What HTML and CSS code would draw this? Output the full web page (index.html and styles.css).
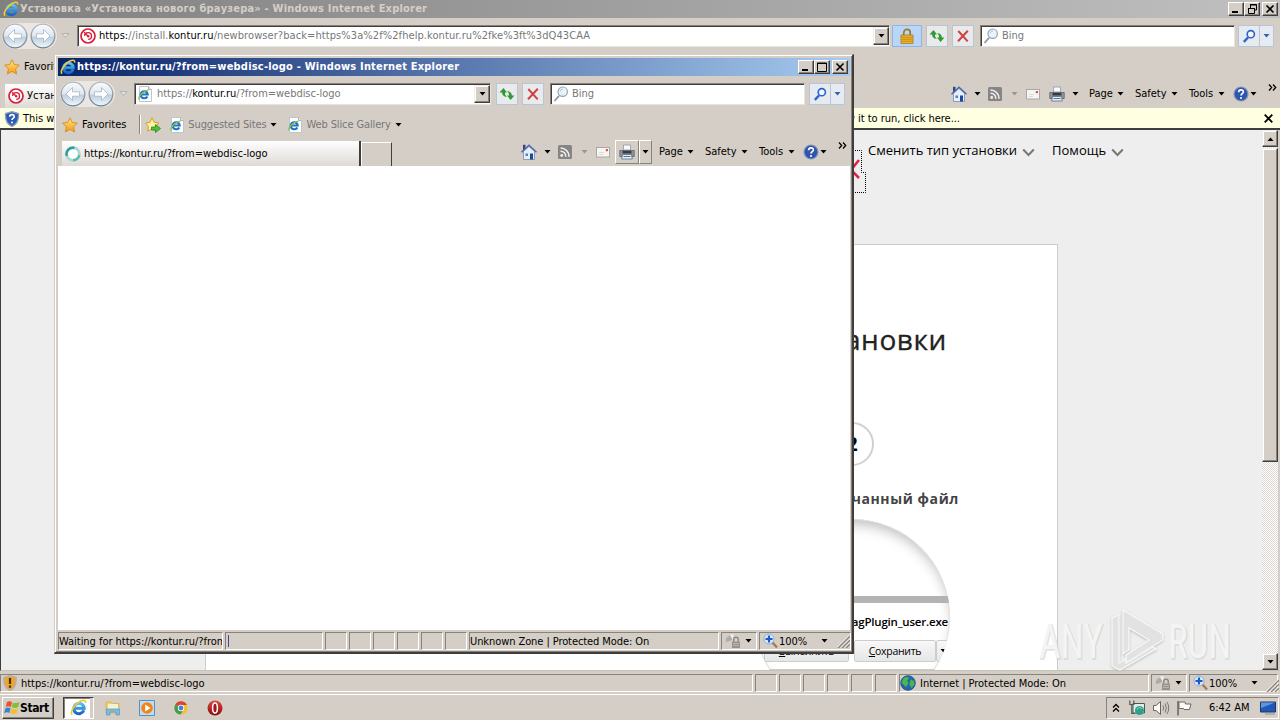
FILE: index.html
```html
<!DOCTYPE html>
<html lang="ru">
  <head>
    <meta charset="UTF-8" />
    <meta
      name="viewport"
      content="width=device-width, initial-scale=1.0"
    />
    <title>Установка «Установка нового браузера»</title>
    <link rel="stylesheet" href="styles.css">
  </head>
  <body>
    <svg width="0" height="0" class="sprite">
      <defs>
        <linearGradient id="orb" x1="0" y1="0" x2="0" y2="1">
          <stop offset="0" stop-color="#fafcfe" />
          <stop offset="0.5" stop-color="#dde7f0" />
          <stop offset="0.55" stop-color="#bccfdf" />
          <stop offset="1" stop-color="#f0f8fd" />
        </linearGradient>
        <linearGradient id="rim" x1="0" y1="0" x2="0" y2="1">
          <stop offset="0" stop-color="#b5b8bb" />
          <stop offset="1" stop-color="#6f7f8d" />
        </linearGradient>
        <linearGradient id="gold" x1="0" y1="0" x2="0" y2="1">
          <stop offset="0" stop-color="#ffe88a" />
          <stop offset="1" stop-color="#f29b12" />
        </linearGradient>
        <linearGradient id="red" x1="0" y1="0" x2="0" y2="1">
          <stop offset="0" stop-color="#e0483f" />
          <stop offset="1" stop-color="#8a0a0c" />
        </linearGradient>
        <linearGradient id="blue" x1="0" y1="0" x2="0" y2="1">
          <stop offset="0" stop-color="#5cc0f5" />
          <stop offset="1" stop-color="#1767c2" />
        </linearGradient>
      </defs>
      <symbol id="ie" viewBox="0 0 16 16">
        <path d="M13 10.600A4.900 4.900 0 1 1 13.300 8.700H5" fill="none" stroke="url(#blue)" stroke-width="2.900" />
        <path d="M2 14.800C-.400 12 4.600 4.600 9.500 2.200C12.500.700 15 .700 14.600 3.600" fill="none" stroke="#f0cb36" stroke-width="1.600" />
      </symbol>
      <symbol id="iepage" viewBox="0 0 16 16">
        <path d="M2.500.500H11.500L14.500 3.500V15.500H2.500Z" fill="#fff" stroke="#bcc5cd" />
        <path d="M11.500.500V3.500H14.500" fill="#dde4ea" stroke="#a9b3bd" />
        <path d="M10.300 10.400A3.500 3.500 0 1 1 10.700 8.500H4" fill="none" stroke="#1c74c8" stroke-width="2.200" />
        <path d="M2 13.500C.800 10.500 7 4.500 11.500 4.200" fill="none" stroke="#8dbf3c" stroke-width="1.300" />
      </symbol>
      <symbol id="orb-left" viewBox="0 0 26 26">
        <circle cx="13" cy="13" r="11.800" fill="url(#orb)" stroke="url(#rim)" stroke-width="1.300" />
        <path d="M12.500 6.500L6 13L12.500 19.500V15.200H19.500V10.800H12.500Z" fill="#fff" stroke="#a4b5c4" stroke-width=".8" />
      </symbol>
      <symbol id="orb-right" viewBox="0 0 26 26">
        <circle cx="13" cy="13" r="11.800" fill="url(#orb)" stroke="url(#rim)" stroke-width="1.300" />
        <path d="M13.500 6.500L20 13L13.500 19.500V15.200H6.500V10.800H13.500Z" fill="#fff" stroke="#a4b5c4" stroke-width=".8" />
      </symbol>
      <symbol id="kontur" viewBox="0 0 16 16">
        <circle cx="8" cy="8" r="7" fill="#fff" stroke="#d8203c" stroke-width="1.700" />
        <path d="M4.700 8A3.400 3.400 0 1 1 8.200 11.400M8 8L4 4.200" fill="none" stroke="#d8203c" stroke-width="1.400" />
        <circle cx="8.200" cy="8.200" r="1.200" fill="#d8203c" />
      </symbol>
      <symbol id="star" viewBox="0 0 16 16">
        <path d="M8 .8L10.300 5.500L15.400 6.100L11.600 9.700L12.600 15L8 12.400L3.400 15L4.400 9.700L.600 6.100L5.700 5.500Z" fill="url(#gold)" stroke="#d98a1a" stroke-width=".9" />
      </symbol>
      <symbol id="star-add" viewBox="0 0 16 16">
        <path d="M7 .8L9.200 5.300L14 6L10.400 9.400L11 14L7 12L2.600 14L3.500 9.400L.600 6.100L5 5.300Z" fill="#fff2a4" stroke="#d9a01a" />
        <path d="M6.500 10H10.500V7.500L15.500 11.500L10.500 15.500V13H6.500Z" fill="#4fc13e" stroke="#26851e" stroke-width=".8" />
      </symbol>
      <symbol id="refresh" viewBox="0 0 16 16">
        <path d="M.5 6.500L4.500 2L8 6.500H6C5.800 8.500 6.600 9.800 8 11C5 10.800 3 9 3.200 6.500Z" fill="#2f9a33" />
        <path d="M15.500 9.500L11.500 14L8 9.500H10C10.200 7.500 9.400 6.200 8 5C11 5.200 13 7 12.800 9.500Z" fill="#2f9a33" />
      </symbol>
      <symbol id="stop" viewBox="0 0 16 16">
        <path d="M3.300 3L12.700 13.300M12.800 2.800L3 13.300" stroke="#cf4343" stroke-width="2" />
      </symbol>
      <symbol id="lock" viewBox="0 0 16 16">
        <path d="M4.800 7V4.500A3.200 3.200 0 0 1 11.200 4.500V7" fill="none" stroke="#9a7a28" stroke-width="1.700" />
        <path d="M2 7H14V15.500H2Z" fill="#eeb52c" stroke="#a87a14" stroke-width=".8" />
        <path d="M2.500 9.300H13.500M2.500 11.300H13.500M2.500 13.300H13.500" stroke="#bd8717" stroke-width=".8" />
      </symbol>
      <symbol id="glass" viewBox="0 0 16 16">
        <path d="M6 9.800L1.500 15" stroke="#8d99a6" stroke-width="1.800" />
        <circle cx="9.700" cy="5.700" r="4.700" fill="#e9f3fb" stroke="#95a3b3" stroke-width="1.200" />
        <path d="M7 5.500A3 3 0 0 1 10 3" fill="none" stroke="#9fc8ea" />
      </symbol>
      <symbol id="find" viewBox="0 0 16 16">
        <path d="M7 9.500L2.800 13.800" stroke="#2b62d0" stroke-width="2.400" />
        <circle cx="9.800" cy="6.200" r="3.600" fill="#f4f8fd" stroke="#2b62d0" stroke-width="1.600" />
      </symbol>
      <symbol id="home" viewBox="0 0 16 16">
        <path d="M2 .8H4.500V6H2Z" fill="#34457e" />
        <path d="M2.500 7.500L8 2.500L13.500 7.500V15.500H2.500Z" fill="#e6f0fa" stroke="#7a8db0" stroke-width=".8" />
        <path d="M.500 8.300L8 1.300L15.500 8.300" fill="none" stroke="#4f69a8" stroke-width="1.500" />
        <path d="M9 9.500H12V15.500H9Z" fill="#1a4a94" />
        <path d="M4.500 9.500H7V12H4.500Z" fill="#5a7dbb" />
      </symbol>
      <symbol id="rss" viewBox="0 0 16 16">
        <rect x="1" y="1" width="14" height="14" rx="1.500" fill="#858585" />
        <circle cx="4.700" cy="11.500" r="1.400" fill="#f3f0ec" />
        <path d="M3.500 7.300A5 5 0 0 1 8.800 12.700M3.500 4A8.500 8.500 0 0 1 12 12.700" fill="none" stroke="#f3f0ec" stroke-width="1.600" />
      </symbol>
      <symbol id="mail" viewBox="0 0 16 16">
        <rect x="1.500" y="3.500" width="13" height="9.500" fill="#f7f5f4" stroke="#aca6a3" />
        <path d="M4 8.500H9M4 10.500H8" stroke="#dedad8" />
        <rect x="10.800" y="5" width="2.200" height="2.200" fill="#d9524c" />
      </symbol>
      <symbol id="printer" viewBox="0 0 16 16">
        <path d="M4.500 1H11.500V6H4.500Z" fill="#f7fafc" stroke="#9097a0" stroke-width=".8" />
        <path d="M.800 6.500H15.200V12.500H.800Z" fill="#8f959d" stroke="#5b616b" stroke-width=".8" />
        <path d="M3.500 7H12.500V9.500H3.500Z" fill="#363c45" />
        <path d="M3.500 10.500H12.500L13.300 15H2.700Z" fill="#e5edf6" stroke="#636b77" stroke-width=".8" />
        <path d="M4.500 12.500H11.500" stroke="#3d7cc0" />
      </symbol>
      <symbol id="help" viewBox="0 0 16 16">
        <circle cx="8" cy="8" r="7" fill="#2d55b0" stroke="#8295bb" stroke-width="1.200" />
        <path d="M5.600 6.200C5.800 2.800 10.700 3.200 10.300 6.200C10 7.700 8 7.700 8 9.600" fill="none" stroke="#fff" stroke-width="1.700" />
        <circle cx="8" cy="12" r="1.100" fill="#fff" />
      </symbol>
      <symbol id="shield" viewBox="0 0 16 16">
        <path d="M8 .7L14.500 2.500C15 8.500 12.500 13.500 8 15.500C3.500 13.500 1 8.500 1.500 2.500Z" fill="#2d5cb8" stroke="#93a0b5" stroke-width="1.300" />
        <path d="M5.700 5.700C5.900 2.800 10.500 3 10.200 5.800C10 7.200 8 7.200 8 9" fill="none" stroke="#fff" stroke-width="1.600" />
        <circle cx="8" cy="11.500" r="1" fill="#fff" />
      </symbol>
      <symbol id="warn" viewBox="0 0 16 16">
        <path d="M8 .7L14 2.500C14.500 8.500 12.500 13.500 8 15.500C3.500 13.500 1.500 8.500 2 2.500Z" fill="#eda62c" stroke="#b5b0a9" stroke-width="1.600" />
        <path d="M8 3V9M8 10.500V12.800" stroke="#4c2a08" stroke-width="2.200" />
      </symbol>
      <symbol id="filter" viewBox="0 0 16 16">
        <path d="M.800 9A6 6 0 0 1 5 2.500L8 6L5 8Z" fill="#aeaba8" />
        <path d="M5 2L8.500 1L8 7Z" fill="#f2f0ee" />
        <path d="M8.700 8.500V6.500A2.300 2.300 0 0 1 13.300 6.500V8.500" fill="none" stroke="#858280" stroke-width="1.300" />
        <path d="M7 8.500H15V15H7Z" fill="#94918e" />
        <path d="M8 10.500H14M8 12.500H14" stroke="#bab7b3" />
      </symbol>
      <symbol id="zoom" viewBox="0 0 16 16">
        <path d="M9 9L14 14.500" stroke="#a8794a" stroke-width="2.300" />
        <circle cx="6" cy="6" r="5" fill="#dbeafa" stroke="#90b0d8" />
        <path d="M6 2.500V9.500M2.500 6H9.500" stroke="#1e5cc4" stroke-width="2.200" />
      </symbol>
      <symbol id="globe" viewBox="0 0 16 16">
        <circle cx="8" cy="8" r="7.300" fill="#2366b5" stroke="#1d4983" stroke-width=".8" />
        <path d="M3 4C5 1.500 8 1.500 9 3L7 6L8.500 8L6 12L3.500 9.500L1.500 8Z" fill="#4cb848" />
        <path d="M10.500 4.500L14 6L14.500 9.500L11.500 13L9.500 9.500Z" fill="#4cb848" />
      </symbol>
      <symbol id="spin" viewBox="0 0 16 16">
        <circle cx="8" cy="8" r="6.300" fill="#fff" stroke="#a9d9d6" stroke-width="2.800" />
        <path d="M1.800 10A6.300 6.300 0 0 1 9.500 2" fill="none" stroke="#2b9f96" stroke-width="2.400" />
        <path d="M8 14.300A6.300 6.300 0 0 0 14.300 9" fill="none" stroke="#5dbbb2" stroke-width="2.400" />
      </symbol>
      <symbol id="caret" viewBox="0 0 7 4">
        <path d="M.500 0H6.500L3.500 3.500Z" fill="currentColor" />
      </symbol>
      <symbol id="grip" viewBox="0 0 13 13">
        <path d="M1 13L13 1M5 13L13 5M9 13L13 9" stroke="#87827b" stroke-width="1.500" />
        <path d="M0 12.500L12.500 0M4 12.500L13 3.500M8 12.500L13 7.500" stroke="#fff" stroke-width=".8" />
      </symbol>
      <symbol id="chevron" viewBox="0 0 13 9">
        <path d="M1.200 1.500L6.500 7L11.800 1.500" fill="none" stroke="#777" stroke-width="2" />
      </symbol>
      <symbol id="more" viewBox="0 0 9 7">
        <path d="M1 .500L3.700 3.500L1 6.500M5 .500L7.700 3.500L5 6.500" fill="none" stroke="#000" stroke-width="1.300" />
      </symbol>
      <symbol id="drop" viewBox="0 0 9 6">
        <path d="M1 .500H8L4.500 4.500Z" fill="#e4e1dd" stroke="#aaa7a3" stroke-width=".8" />
      </symbol>
      <symbol id="min" viewBox="0 0 12 10"><path d="M2 7H8V9H2Z" /></symbol>
      <symbol id="max" viewBox="0 0 12 10"><path d="M1.500 1H10.500V9.500H1.500ZM1.500 1.500H10.500" fill="none" stroke="#000" /></symbol>
      <symbol id="restore" viewBox="0 0 12 10">
        <path d="M4.500 4V.500H10.500V6H8.500M4 1H11M2.500 4.500H8.500V9.500H2.500ZM2 4.500H9" fill="none" stroke="#000" />
      </symbol>
      <symbol id="close" viewBox="0 0 12 10"><path d="M2.500 1.500L9.500 8.500M9.500 1.500L2.500 8.500" stroke="#000" stroke-width="1.700" /></symbol>
    </svg>

    <div class="desktop">
      <!-- main browser window -->
      <div class="browser">
        <div class="titlebar titlebar-inactive">
          <svg class="icon"><use href="#ie" /></svg>
          <span class="title">Установка «Установка нового браузера» - Windows Internet Explorer</span>
          <div class="caption">
            <span class="cap"><svg><use href="#min" /></svg></span>
            <span class="cap"><svg><use href="#restore" /></svg></span>
            <span class="cap cap-close"><svg><use href="#close" /></svg></span>
          </div>
        </div>

        <div class="navbar">
          <div class="orbs">
            <svg><use href="#orb-left" /></svg>
            <svg><use href="#orb-right" /></svg>
          </div>
          <svg class="history"><use href="#drop" /></svg>
          <div class="address">
            <svg class="icon"><use href="#kontur" /></svg>
            <span class="url url-back"><b>https:</b>//install.<b>kontur.ru</b>/newbrowser?back=https%3a%2f%2fhelp.kontur.ru%2fke%3ft%3dQ43CAA</span>
            <span class="combo"><svg><use href="#caret" /></svg></span>
          </div>
          <span class="btn btn-lock"><svg class="icon"><use href="#lock" /></svg></span>
          <span class="btn btn-refresh"><svg class="icon"><use href="#refresh" /></svg></span>
          <span class="btn btn-stop"><svg class="icon"><use href="#stop" /></svg></span>
          <div class="search"><svg class="icon"><use href="#glass" /></svg>Bing</div>
          <div class="go">
            <span><svg class="icon"><use href="#find" /></svg></span>
            <i><svg><use href="#caret" /></svg></i>
          </div>
        </div>

        <div class="favbar">
          <svg class="icon"><use href="#star" /></svg>
          <span class="fav">Favorites</span>
        </div>

        <div class="tabbar">
          <div class="tab tab-back">
            <svg class="icon"><use href="#kontur" /></svg>
            <span>Устан</span>
          </div>
          <div class="tools">
            <svg class="icon"><use href="#home" /></svg>
            <i class="gap-home"><svg><use href="#caret" /></svg></i>
            <svg class="icon"><use href="#rss" /></svg>
            <i class="gap-rss"><svg><use href="#caret" /></svg></i>
            <svg class="icon"><use href="#mail" /></svg>
            <div class="print">
              <span><svg class="icon"><use href="#printer" /></svg></span>
              <i><svg><use href="#caret" /></svg></i>
            </div>
            <span class="menu page">Page<svg><use href="#caret" /></svg></span>
            <span class="menu safety">Safety<svg><use href="#caret" /></svg></span>
            <span class="menu tool">Tools<svg><use href="#caret" /></svg></span>
            <svg class="icon"><use href="#help" /></svg>
            <i class="gap-help"><svg><use href="#caret" /></svg></i>
            <svg class="more"><use href="#more" /></svg>
          </div>
        </div>

        <div class="infobar">
          <svg class="icon"><use href="#shield" /></svg>
          <span>This w</span>
          <span class="info-end">w it to run, click here...</span>
          <svg class="info-close"><use href="#close" /></svg>
        </div>

        <div class="viewport">
          <div class="site">
            <div class="site-head">
              <svg class="logo" viewBox="0 0 20 44">
                <path d="M12 10L4 20L12 28" fill="none" stroke="#e0213f" stroke-width="2.500" />
                <path d="M0 .500H14.500V22.500H18.500V42.500H0" fill="none" stroke="#000" stroke-dasharray="1 1" />
              </svg>
              <span class="link">Сменить тип установки</span>
              <svg class="chev"><use href="#chevron" /></svg>
              <span class="link link-help">Помощь</span>
              <svg class="chev"><use href="#chevron" /></svg>
            </div>
            <div class="card">
              <h1>ановки</h1>
              <div class="step">
                <div class="num">2</div>
                <h2>чанный файл</h2>
                <div class="lens">
                  <div class="bar"></div>
                  <div class="file">agPlugin_user.exe</div>
                  <div class="choices">
                    <span class="choice"><u>В</u>ыполнить</span>
                    <span class="choice choice-save"><u>С</u>охранить</span>
                    <span class="choice choice-arrow"><svg><use href="#caret" /></svg></span>
                  </div>
                </div>
              </div>
            </div>
          </div>
          <div class="scroll">
            <span class="scroll-btn"><svg class="flip"><use href="#caret" /></svg></span>
            <span class="thumb"></span>
            <span class="scroll-btn scroll-down"><svg><use href="#caret" /></svg></span>
          </div>
        </div>

        <div class="status status-back">
          <span class="pane pane-url"><svg class="icon"><use href="#warn" /></svg><em>https://kontur.ru/?from=webdisc-logo</em></span>
          <span class="pane slot"></span>
          <span class="pane slot"></span>
          <span class="pane slot"></span>
          <span class="pane slot"></span>
          <span class="pane slot"></span>
          <span class="pane slot"></span>
          <span class="pane zone"><svg class="icon"><use href="#globe" /></svg><em>Internet | Protected Mode: On</em></span>
          <span class="pane filter"><svg class="icon"><use href="#filter" /></svg><svg class="car"><use href="#caret" /></svg></span>
          <span class="pane zoom"><svg class="icon"><use href="#zoom" /></svg><em>100%</em><svg class="car"><use href="#caret" /></svg></span>
          <svg class="grip"><use href="#grip" /></svg>
        </div>
      </div>

      <div class="taskbar">
        <div class="start">
          <svg class="icon" viewBox="0 0 16 16">
            <path d="M3 2C4.800.700 6.500 1 8 2L6.900 7C5.300 6 3.500 6 1.700 7.100Z" fill="#e8542a" />
            <path d="M8.900 2.400C11 3.500 13 3.300 15.600 2L14.200 7C12 8.200 9.800 8.200 7.800 7.300Z" fill="#86bd3b" />
            <path d="M1.400 8.200C3.200 7.200 4.900 7.200 6.600 8.200L5.400 13C3.800 12 2 12.200 0 13.200Z" fill="#3a84cd" />
            <path d="M7.500 8.500C9.400 9.400 11.400 9.400 13.900 8.200L12.700 12.900C10.300 14.200 8.200 14 6.300 13.200Z" fill="#f3bf2b" />
          </svg>
          Start
        </div>
        <div class="task"><svg class="task-icon"><use href="#ie" /></svg></div>
        <svg class="launch" viewBox="0 0 16 16">
          <path d="M1 2H6L7.500 3.500H14V13H1Z" fill="#efcf6c" stroke="#cfae4c" stroke-width=".7" />
          <path d="M3 4H13V9H3Z" fill="#f8f2cc" />
          <path d="M1.500 9H14.500V15H11V12H5V15H1.500Z" fill="#80bbdf" stroke="#5797c4" stroke-width=".7" />
        </svg>
        <svg class="launch" viewBox="0 0 16 16">
          <path d="M.500.500H15.500V15.500H.500Z" fill="#c4dcf0" stroke="#4d92cb" />
          <circle cx="8" cy="8" r="5.800" fill="#f08418" />
          <path d="M6.200 4.500L11.500 8L6.200 11.500Z" fill="#fff" />
        </svg>
        <svg class="launch" viewBox="0 0 16 16">
          <circle cx="8" cy="8" r="6.600" fill="#f2c32c" />
          <path d="M8 8L2.200 4.800A6.600 6.600 0 0 1 13.900 5H8Z" fill="#d94434" />
          <path d="M8 8L2.200 4.800A6.600 6.600 0 0 0 7.500 14.600L10.500 9.500Z" fill="#3c9f4d" />
          <circle cx="8" cy="8" r="3.200" fill="#fff" />
          <circle cx="8" cy="8" r="2.400" fill="#4480dc" />
        </svg>
        <svg class="launch" viewBox="0 0 16 16">
          <circle cx="8" cy="8" r="7.500" fill="url(#red)" />
          <ellipse cx="8" cy="8" rx="2.400" ry="5" fill="#a3151a" stroke="#fff" stroke-width="1.500" />
        </svg>
        <div class="tray">
          <svg class="tray-up" viewBox="0 0 8 10">
            <path d="M1 4.500L4 1.500L7 4.500M1 8.500L4 5.500L7 8.500" fill="none" stroke="#000" stroke-width="1.300" />
          </svg>
          <svg class="icon tray-net" viewBox="0 0 16 16">
            <path d="M4 3.500H15.500V13H4Z" fill="#ddeee9" stroke="#425d57" />
            <circle cx="10.500" cy="10.500" r="4.500" fill="#2f9f87" />
            <path d="M8 9.500C9 7 12 7 13 9" fill="none" stroke="#a8dfd0" />
            <path d="M.800.500V4.500H4.800V.500M2.800 4.500V13.500H6" fill="none" stroke="#4f5b58" stroke-width="1.200" />
          </svg>
          <svg class="icon tray-sound" viewBox="0 0 18 16">
            <path d="M1.500 5.500H4L8.500 1.500V14.500L4 10.500H1.500Z" fill="#faf9f7" stroke="#68645f" />
            <path d="M11 5.500Q12.500 8 11 10.500M13 3.500Q15.800 8 13 12.500M15 2Q18.500 8 15 14" fill="none" stroke="#7b7772" />
          </svg>
          <svg class="icon tray-flag" viewBox="0 0 16 16">
            <path d="M2 1V15.500" stroke="#6d6964" stroke-width="1.600" />
            <path d="M3 2H9L9.500 4H15L13.500 9.500H8L7.500 8.500H3Z" fill="#fbfaf8" stroke="#6d6964" />
          </svg>
          <span class="clock">6:42 AM</span>
          <svg class="icon" viewBox="0 0 16 16">
            <path d="M.500 2H15.500V12H.500Z" fill="#1e58b8" stroke="#24365c" />
            <path d="M1 2.500H15L1 8Z" fill="#5c96e0" />
            <path d="M5 14H15" stroke="#8790a3" />
          </svg>
        </div>
      </div>

      <!-- popup window over the main one -->
      <div class="popup">
        <div class="titlebar titlebar-active">
          <svg class="icon"><use href="#ie" /></svg>
          <span class="title">https://kontur.ru/?from=webdisc-logo - Windows Internet Explorer</span>
          <div class="caption">
            <span class="cap"><svg><use href="#min" /></svg></span>
            <span class="cap"><svg><use href="#max" /></svg></span>
            <span class="cap cap-close"><svg><use href="#close" /></svg></span>
          </div>
        </div>

        <div class="navbar">
          <div class="orbs">
            <svg><use href="#orb-left" /></svg>
            <svg><use href="#orb-right" /></svg>
          </div>
          <svg class="history"><use href="#drop" /></svg>
          <div class="address">
            <svg class="icon"><use href="#iepage" /></svg>
            <span class="url">https://<b>kontur.ru</b>/?from=webdisc-logo</span>
            <span class="combo"><svg><use href="#caret" /></svg></span>
          </div>
          <span class="btn btn-refresh"><svg class="icon"><use href="#refresh" /></svg></span>
          <span class="btn btn-stop"><svg class="icon"><use href="#stop" /></svg></span>
          <div class="search"><svg class="icon"><use href="#glass" /></svg>Bing</div>
          <div class="go">
            <span><svg class="icon"><use href="#find" /></svg></span>
            <i><svg><use href="#caret" /></svg></i>
          </div>
        </div>

        <div class="favbar">
          <svg class="icon"><use href="#star" /></svg>
          <span class="fav">Favorites</span>
          <span class="sep"></span>
          <svg class="icon"><use href="#star-add" /></svg>
          <span class="site-link"><svg class="icon"><use href="#iepage" /></svg>Suggested Sites<svg class="car"><use href="#caret" /></svg></span>
          <span class="site-link slices"><svg class="icon"><use href="#iepage" /></svg>Web Slice Gallery<svg class="car"><use href="#caret" /></svg></span>
        </div>

        <div class="tabbar">
          <div class="tab">
            <svg class="icon"><use href="#spin" /></svg>
            <span>https://kontur.ru/?from=webdisc-logo</span>
          </div>
          <div class="newtab"></div>
          <div class="tools">
            <svg class="icon"><use href="#home" /></svg>
            <i class="gap-home"><svg><use href="#caret" /></svg></i>
            <svg class="icon"><use href="#rss" /></svg>
            <i class="gap-rss"><svg><use href="#caret" /></svg></i>
            <svg class="icon"><use href="#mail" /></svg>
            <div class="print print-hot">
              <span><svg class="icon"><use href="#printer" /></svg></span>
              <i><svg><use href="#caret" /></svg></i>
            </div>
            <span class="menu page">Page<svg><use href="#caret" /></svg></span>
            <span class="menu safety">Safety<svg><use href="#caret" /></svg></span>
            <span class="menu tool">Tools<svg><use href="#caret" /></svg></span>
            <svg class="icon"><use href="#help" /></svg>
            <i class="gap-help"><svg><use href="#caret" /></svg></i>
            <svg class="more"><use href="#more" /></svg>
          </div>
        </div>

        <div class="blank"></div>

        <div class="status">
          <span class="pane waiting"><em>Waiting for https://kontur.ru/?from</em></span>
          <span class="pane progress"></span>
          <span class="pane slot"></span>
          <span class="pane slot"></span>
          <span class="pane slot"></span>
          <span class="pane slot"></span>
          <span class="pane slot"></span>
          <span class="pane slot"></span>
          <span class="pane zone zone-unknown"><em>Unknown Zone | Protected Mode: On</em></span>
          <span class="pane filter"><svg class="icon"><use href="#filter" /></svg><svg class="car"><use href="#caret" /></svg></span>
          <span class="pane zoom"><svg class="icon"><use href="#zoom" /></svg><em>100%</em><svg class="car"><use href="#caret" /></svg></span>
          <svg class="grip"><use href="#grip" /></svg>
        </div>
      </div>

      <svg class="watermark" viewBox="0 0 200 66">
        <g class="wm-shade">
          <text x="4" y="53" textLength="64" lengthAdjust="spacingAndGlyphs">ANY</text>
          <text x="133" y="53" textLength="63" lengthAdjust="spacingAndGlyphs">RUN</text>
        </g>
        <g class="wm-light">
          <text x="3" y="52" textLength="64" lengthAdjust="spacingAndGlyphs">ANY</text>
          <text x="132" y="52" textLength="63" lengthAdjust="spacingAndGlyphs">RUN</text>
        </g>
        <g class="wm-mark">
          <path d="M76 12L83 9V57L113 39L120 43L84 64L76 60Z" />
          <path d="M87 4L127 28V34L90 57V49L113 34L93 22V44L87 48Z" />
        </g>
      </svg>
    </div>
  </body>
</html>
```

FILE: styles.css
```css
:root {
  --face: #d5cec6;
  --light: #fff;
  --shadow: #87827b;
  --dark: #403e3c;
  --ui: 'DejaVu Sans Condensed', 'DejaVu Sans', sans-serif;
}

* {
  box-sizing: border-box;
}

html,
body {
  margin: 0;
}

body {
  width: 1280px;
  height: 720px;
  overflow: hidden;
  font-family: var(--ui);
  font-stretch: condensed;
  font-size: 11px;
  line-height: 14px;
  letter-spacing: -0.03px;
  white-space: nowrap;
  color: #000;
}

svg {
  display: block;
  flex: none;
}

em,
i {
  font-style: normal;
}

.sprite {
  position: absolute;
}

.icon {
  width: 16px;
  height: 16px;
}

.desktop {
  position: relative;
  width: 1280px;
  height: 720px;
  overflow: hidden;
  background: var(--face);
}

.browser {
  display: flex;
  flex-direction: column;
  height: 694px;
}

.popup {
  position: absolute;
  left: 54px;
  top: 54px;
  display: flex;
  flex-direction: column;
  width: 800px;
  height: 600px;
  padding: 3px 1px 2px 3px;
  background: var(--face);
  border: 1px solid var(--face);
  border-right: 2px solid var(--dark);
  border-bottom: 2px solid var(--dark);
  box-shadow: inset 1px 1px var(--light), inset -1px -1px var(--shadow);
}

/* title bars */

.titlebar {
  display: flex;
  align-items: center;
  height: 18px;
  padding: 0 2px 0 3px;
}

.titlebar-inactive {
  background: linear-gradient(to right, #808080, #c0c0c0);
  color: #d5cec6;
}

.titlebar-active {
  margin-right: 1px;
  padding-left: 2px;
  background: linear-gradient(to right, #0a246a, #a6caf0);
  color: #fff;
}

.title {
  flex: 1;
  margin-left: 1px;
  font-weight: bold;
  letter-spacing: 0.2px;
}

.caption {
  display: flex;
}

.cap {
  display: flex;
  align-items: center;
  justify-content: center;
  width: 16px;
  height: 14px;
  background: var(--face);
  border: 1px solid;
  border-color: var(--light) var(--dark) var(--dark) var(--light);
  box-shadow: inset -1px -1px var(--shadow);
}

.cap svg {
  width: 12px;
  height: 10px;
}

.cap-close {
  margin-left: 2px;
}

/* address row */

.navbar {
  display: flex;
  align-items: center;
  height: 35px;
  padding: 0 6px 0 2px;
}

.orbs {
  display: flex;
  gap: 2px;
  padding-right: 1px;
  border-radius: 13px;
  background: #e9e6e3;
}

.orbs svg {
  width: 26px;
  height: 26px;
}

.history {
  width: 9px;
  height: 6px;
  margin: 0 6px 0 4px;
}

.browser .history {
  margin-right: 7px;
}

.address,
.search {
  display: flex;
  align-items: center;
  height: 22px;
  background: #fff;
  border: 1px solid;
  border-color: var(--shadow) #e7e3de #e7e3de var(--shadow);
  box-shadow: inset 1px 1px var(--dark);
}

.address {
  flex: 1;
  padding-left: 2px;
}

.url {
  flex: 1;
  margin-left: 4px;
  color: #777;
}

.url-back {
  margin-left: 3px;
  letter-spacing: 0.08px;
}

.url b {
  font-weight: normal;
  color: #000;
}

.combo,
.scroll-btn {
  display: flex;
  align-items: center;
  justify-content: center;
  width: 16px;
  background: var(--face);
  border: 1px solid;
  border-color: #f1eeea var(--dark) var(--dark) #f1eeea;
  box-shadow: inset -1px -1px var(--shadow), inset 1px 1px #fff;
}

.combo {
  height: 18px;
}

i svg,
.combo svg,
.scroll-btn svg,
.menu svg,
.car,
.choice svg {
  width: 7px;
  height: 4px;
}

.btn {
  display: flex;
  align-items: center;
  justify-content: center;
  width: 22px;
  height: 22px;
  background: #e9eaec;
  border: 1px solid #b8c5d6;
}

.btn-lock {
  width: 30px;
  margin-left: 2px;
  background: #b9d5f8;
  border-color: #8fb5e6;
}

.btn-refresh {
  margin-left: 5px;
}

.btn-lock + .btn-refresh {
  margin-left: 4px;
}

.btn-stop {
  margin-left: 4px;
}

.search {
  width: 255px;
  margin-left: 6px;
  padding-left: 2px;
  gap: 3px;
  color: #777;
}

.go {
  display: flex;
  height: 22px;
  margin-left: 4px;
  background: #e6ebf2;
  border: 1px solid #b8c5d6;
}

.browser .go {
  margin-left: 3px;
}

.go span {
  display: flex;
  align-items: center;
  justify-content: center;
  width: 20px;
}

.go i {
  display: flex;
  align-items: center;
  justify-content: center;
  width: 14px;
  border-left: 1px solid #b8c5d6;
  color: #2b62b4;
}

/* favorites row */

.favbar {
  display: flex;
  align-items: center;
  height: 27px;
  padding-left: 4px;
}

.fav {
  margin-left: 4px;
}

.sep {
  width: 2px;
  height: 19px;
  margin: 0 4px 0 13px;
  border-left: 1px solid var(--shadow);
  border-right: 1px solid #fff;
}

.site-link {
  display: flex;
  align-items: center;
  margin-left: 8px;
  letter-spacing: -0.12px;
  color: #777;
}

.slices {
  margin-left: 10px;
}

.site-link .icon {
  margin-right: 3px;
}

.site-link .car {
  margin-left: 4px;
  color: #000;
}

/* tabs and command bar */

.tabbar {
  display: flex;
  align-items: flex-end;
  height: 28px;
  padding-left: 5px;
}

.popup .tabbar {
  padding-left: 4px;
}

.tab {
  display: flex;
  align-items: center;
  width: 299px;
  height: 25px;
  padding-left: 3px;
  gap: 3px;
  background: linear-gradient(#fff, #f2f0ee 40%, #dedad5);
  border-right: 2px solid var(--dark);
}

.tab-back {
  height: 24px;
}

.newtab {
  width: 31px;
  height: 24px;
  border-top: 1px solid #fff;
  border-left: 1px solid #fff;
  border-right: 1px solid var(--dark);
}

.tools {
  display: flex;
  align-items: center;
  height: 28px;
  margin-left: auto;
}

.tools i {
  display: flex;
  align-items: center;
  justify-content: center;
}

.gap-home {
  width: 20px;
}

.gap-rss {
  width: 22px;
  color: #9a958f;
}

.gap-help {
  width: 8px;
}

.print {
  display: flex;
  height: 24px;
  margin-left: 4px;
}

.print span,
.print i {
  border: 1px solid transparent;
}

.print span {
  display: flex;
  align-items: center;
  justify-content: center;
  width: 24px;
}

.print i {
  width: 13px;
}

.print-hot span,
.print-hot i {
  border-color: #fff var(--shadow) var(--shadow) #fff;
}

.menu {
  display: flex;
  align-items: center;
  justify-content: space-between;
  padding: 0 4px 0 7px;
}

.page {
  width: 46px;
}

.safety {
  width: 54px;
}

.tool {
  width: 51px;
  padding-right: 8px;
}

.tools .more {
  width: 9px;
  height: 7px;
  align-self: flex-start;
  margin: 4px 3px 0 11px;
}

.popup .tools .more {
  margin-right: 4px;
}

.infobar {
  display: flex;
  align-items: center;
  height: 22px;
  padding: 1px 5px 0 4px;
  background: #ffffe1;
  border-bottom: 2px solid var(--dark);
}

.infobar span {
  margin-left: 3px;
  padding-top: 1px;
}

.infobar .info-end {
  flex: 1;
  padding-right: 302px;
  text-align: right;
}

.info-close {
  width: 13px;
  height: 11px;
  stroke: #000;
}

/* page */

.viewport {
  display: flex;
  flex: 1;
  min-height: 0;
  padding-right: 2px;
  border-left: 1px solid var(--dark);
  border-bottom: 1px solid #c6c1bb;
}

.site {
  display: flex;
  flex: 1;
  flex-direction: column;
  overflow: hidden;
  background: #eee;
  font-family: 'Open Sans', sans-serif;
  font-stretch: normal;
  letter-spacing: 0;
}

.site-head {
  display: flex;
  flex: none;
  align-items: flex-start;
  height: 114px;
  padding-left: 846px;
}

.logo {
  width: 20px;
  height: 44px;
  margin-top: 20px;
}

.link {
  margin-left: 1px;
  margin-top: 10px;
  font-size: 13px;
  line-height: 20px;
}

.link-help {
  margin-left: 17px;
}

.chev {
  width: 13px;
  height: 9px;
  margin: 18px 0 0 5px;
}

.card {
  flex: 1;
  width: 853px;
  min-height: 0;
  margin-left: 204px;
  overflow: hidden;
  background: #fff;
  border: 1px solid #ccc;
  border-bottom: 0;
}

.card h1 {
  margin: 77px 110px 0 0;
  font-size: 28px;
  font-weight: normal;
  line-height: 34px;
  letter-spacing: 0.6px;
  text-align: right;
  color: #222;
  -webkit-text-stroke: 0.3px #222;
}

.step {
  display: flex;
  flex-direction: column;
  align-items: center;
  width: 210px;
  margin: 66px 0 0 541px;
}

.num {
  width: 44px;
  height: 44px;
  border: 2px solid #d0d0d0;
  border-radius: 50%;
  font-size: 20px;
  font-weight: bold;
  line-height: 40px;
  text-align: center;
}

.step h2 {
  align-self: flex-end;
  margin: 23px -2px 0 0;
  font-size: 14px;
  line-height: 20px;
  letter-spacing: 0.6px;
  color: #444;
}

.lens {
  width: 196px;
  height: 196px;
  margin-top: 10px;
  padding-top: 77px;
  overflow: hidden;
  border-radius: 50%;
  box-shadow: inset 0 0 0 1px #e2e2e2, inset 0 8px 14px -4px #b5b5b5;
}

.bar {
  height: 7px;
  background: #b3b3b3;
}

.file {
  padding: 9px 2px 0 0;
  font-size: 11.5px;
  font-weight: 600;
  line-height: 20px;
  letter-spacing: -0.2px;
  text-align: right;
}

.choices {
  display: flex;
  height: 38px;
  padding: 8px 0 0 10px;
  border-bottom: 1px solid #ccc;
}

.choice {
  flex: none;
  width: 85px;
  height: 22px;
  background: linear-gradient(#f8f8f8, #e6e6e6);
  border: 1px solid #ccc;
  border-radius: 2px;
  font-size: 10.5px;
  line-height: 20px;
  letter-spacing: -0.3px;
  text-align: center;
}

.choice-save {
  width: 82px;
  margin-left: 5px;
}

.choice-arrow {
  display: flex;
  align-items: center;
  padding-left: 3px;
}

/* scrollbar */

.scroll {
  display: flex;
  flex-direction: column;
  width: 16px;
  background: repeating-conic-gradient(#fff 0 25%, #ddd8d2 0 50%) 0 0 / 2px 2px;
}

.scroll-btn {
  height: 17px;
}

.scroll-down {
  margin-top: auto;
}

.flip {
  transform: scaleY(-1);
}

.thumb {
  height: 314px;
  margin-top: 1px;
  background: var(--face);
  border: 1px solid;
  border-color: #f1eeea var(--dark) var(--dark) #f1eeea;
  box-shadow: inset -1px -1px var(--shadow), inset 1px 1px #fff;
}

/* status bar */

.blank {
  flex: 1;
  margin-right: 1px;
  background: #fff;
}

.status {
  display: flex;
  flex: none;
  position: relative;
  gap: 2px;
  height: 20px;
  padding-top: 2px;
}

.status-back {
  height: 23px;
  padding: 3px 2px 2px 0;
}

.pane {
  display: flex;
  align-items: center;
  height: 18px;
  overflow: hidden;
  border: 1px solid;
  border-color: var(--shadow) #fff #fff var(--shadow);
}

.pane em {
  padding-top: 1px;
}

.pane-url {
  width: 753px;
  padding-left: 1px;
  gap: 3px;
}

.slot {
  width: 22px;
}

.waiting {
  width: 165px;
}

.progress {
  width: 98px;
  padding: 2px;
}

.progress::before {
  content: '';
  width: 1px;
  height: 12px;
  background: #3d4a8c;
}

.zone {
  width: 250px;
}

.zone .icon {
  margin-right: 4px;
}

.zone-unknown {
  letter-spacing: -0.08px;
}

.filter {
  width: 36px;
  padding-left: 3px;
  gap: 4px;
}

.zoom {
  flex: 1;
  padding-left: 3px;
}

.zoom .car {
  margin-left: 14px;
}

.grip {
  position: absolute;
  right: 1px;
  bottom: 2px;
  width: 13px;
  height: 13px;
}

/* taskbar */

.taskbar {
  display: flex;
  align-items: center;
  height: 26px;
  padding: 0 1px 0 2px;
  border-top: 1px solid #fff;
}

.start {
  display: flex;
  align-items: center;
  width: 52px;
  height: 22px;
  padding-left: 1px;
  font-size: 12px;
  font-weight: bold;
  letter-spacing: -0.4px;
  border: 1px solid;
  border-color: #fff var(--dark) var(--dark) #fff;
  box-shadow: inset -1px -1px var(--shadow);
}

.task {
  display: flex;
  align-items: center;
  justify-content: center;
  width: 31px;
  height: 22px;
  margin: 0 11px 0 9px;
  background: #fff;
  border: 1px solid;
  border-color: var(--dark) #fff #fff var(--dark);
  box-shadow: inset -3px 0 var(--face), inset 1px 1px var(--shadow);
}

.task-icon {
  width: 17px;
  height: 17px;
}

.launch {
  width: 16px;
  height: 16px;
  margin-right: 18px;
}

.tray {
  display: flex;
  align-items: center;
  width: 173px;
  height: 22px;
  margin-left: auto;
  padding: 0 2px 0 5px;
  border: 1px solid;
  border-color: var(--shadow) #fff #fff var(--shadow);
}

.tray-up {
  width: 8px;
  height: 10px;
}

.tray-net {
  margin-left: 9px;
}

.tray-sound {
  width: 18px;
  margin-left: 7px;
}

.tray-flag {
  margin-left: 6px;
}

.clock {
  flex: 1;
  padding-left: 17px;
}

.watermark {
  position: absolute;
  left: 1036px;
  top: 606px;
  width: 200px;
  height: 66px;
  font-family: Roboto, sans-serif;
  font-size: 49px;
  letter-spacing: 0;
}

.wm-shade {
  fill: #d0d0d0;
  stroke: #d0d0d0;
  stroke-width: 1.5;
  opacity: 0.6;
}

.wm-light {
  fill: #f4f4f4;
}

.wm-mark {
  fill: #e2e2e2;
  stroke: #fafafa;
  stroke-width: 1.2;
  filter: drop-shadow(0 1px 1px #bbb);
}
```
